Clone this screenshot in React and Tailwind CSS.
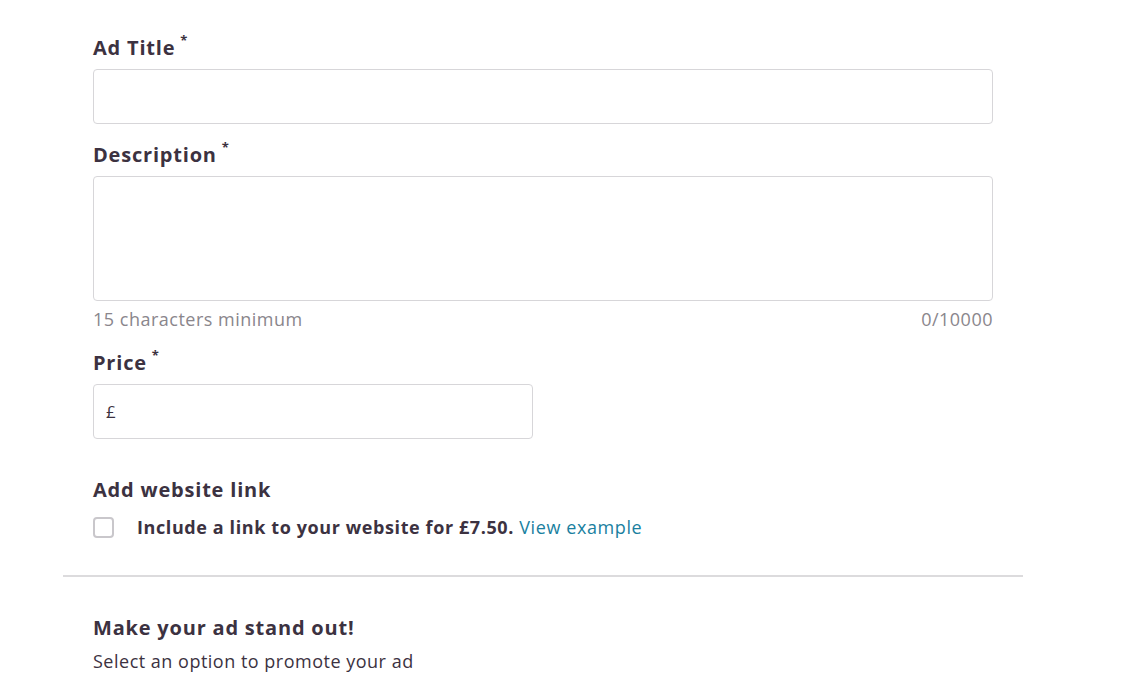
import React from 'react';

const Label = ({ children }) => (
  <label className="flex items-start text-[20px] font-bold leading-[28px] tracking-[0.8px] text-[#3c3241]">
    {children}
    <span className="ml-[5px] text-[13px] leading-[12px]">*</span>
  </label>
);

export default function App() {
  return (
    <div className="min-h-screen bg-white font-['Open_Sans',sans-serif] text-[#3c3241]">
      <div className="ml-[63px] w-[960px]">
        <div className="px-[30px] pt-[34px]">
          {/* Ad title */}
          <Label>Ad Title</Label>
          <input
            type="text"
            className="mt-[7px] block h-[55px] w-full rounded-[4px] border border-[#d7d6d9] bg-white px-3 outline-none"
          />

          {/* Description */}
          <div className="mt-[17px]">
            <Label>Description</Label>
            <textarea className="mt-[7px] block h-[125px] w-full resize-none rounded-[4px] border border-[#d7d6d9] bg-white p-3 outline-none" />
            <div className="mt-[6px] flex justify-between text-[18px] leading-[24px] tracking-[0.5px] text-[#8a868c]">
              <span>15 characters minimum</span>
              <span>0/10000</span>
            </div>
          </div>

          {/* Price */}
          <div className="mt-[18px]">
            <Label>Price</Label>
            <div className="mt-[7px] flex h-[55px] w-[440px] items-center rounded-[4px] border border-[#d7d6d9] bg-white px-[12px]">
              <span className="text-[17px] text-[#3c3241]">£</span>
              <input type="text" className="ml-2 h-full flex-1 outline-none" />
            </div>
          </div>

          {/* Website link */}
          <div className="mt-[37px]">
            <h3 className="text-[20px] font-bold leading-[28px] tracking-[0.8px]">Add website link</h3>
            <label className="mt-[10px] flex items-center">
              <span className="block h-[21px] w-[21px] rounded-[4px] border-2 border-[#c9c7cb] bg-white" />
              <span className="ml-[23px] text-[18px] font-bold leading-[26px] tracking-[0.6px]">
                Include a link to your website for £7.50.{' '}
                <a className="font-normal text-[#1a7fa0]" href="#">View example</a>
              </span>
            </label>
          </div>
        </div>

        <div className="mt-[35px] h-[2px] w-full bg-[#dcdbdd]" />

        <div className="px-[30px] pt-[37px]">
          <h3 className="text-[20px] font-bold leading-[28px] tracking-[0.8px]">Make your ad stand out!</h3>
          <p className="mt-[7px] text-[18px] leading-[24px] tracking-[0.5px]">Select an option to promote your ad</p>
        </div>
      </div>
    </div>
  );
}
